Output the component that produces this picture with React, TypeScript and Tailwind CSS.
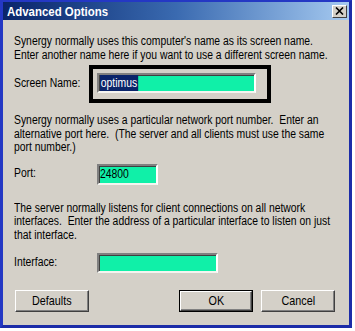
import React from "react";

const font = { fontFamily: '"Liberation Sans", Arial, sans-serif' };

function N({ children, center }: { children: React.ReactNode; center?: boolean }) {
  return (
    <span
      className={`inline-block whitespace-nowrap scale-x-[0.83] ${center ? "origin-center" : "origin-left"}`}
    >
      {children}
    </span>
  );
}

function Field({ w, h, children }: { w: string; h: string; children?: React.ReactNode }) {
  return (
    <div
      className={`${w} ${h} bg-[#10f0a8] border-2 border-t-[#808080] border-l-[#808080] border-r-white border-b-[#f4f4f0] shadow-[inset_1px_1px_0_#404040] flex items-center pl-[1px] text-[12.5px] leading-none text-black overflow-hidden`}
    >
      {children}
    </div>
  );
}

function Btn({ label, def }: { label: string; def?: boolean }) {
  const inner = (
    <div className="w-full h-full bg-[#d4d0c8] border border-t-white border-l-white border-r-[#404040] border-b-[#404040] shadow-[inset_-1px_-1px_0_#808080] flex items-center justify-center text-[13px] text-black">
      <N center>{label}</N>
    </div>
  );
  return def ? (
    <div className="w-[74px] h-[22px] border border-black">{inner}</div>
  ) : (
    <div className="w-[74px] h-[22px]">{inner}</div>
  );
}

function Line({ children }: { children: React.ReactNode }) {
  return (
    <div className="h-[13.5px]">
      <N>{children}</N>
    </div>
  );
}

export default function App() {
  return (
    <div className="w-[355px] h-[331px] bg-white overflow-hidden" style={font}>
      <div className="w-[352px] h-[328px] border-[3px] border-t-2 border-[#2438c4] border-r-[#1c2ca8] border-b-[#1c2ca8] bg-[#d4d0c8] flex flex-col">
        <div className="h-[18px] bg-gradient-to-r from-[#0a246a] via-[#3a6ab0] to-[#a6caf0] flex items-center justify-between pl-[4px] pr-[2px]">
          <span className="text-white font-bold text-[13px] leading-none inline-block whitespace-nowrap scale-x-[0.88] origin-left">
            Advanced Options
          </span>
          <div className="w-[15px] h-[13px] bg-[#d4d0c8] border border-t-white border-l-white border-r-[#404040] border-b-[#404040] flex items-center justify-center">
            <svg width="9" height="8" viewBox="0 0 9 8">
              <path d="M1 0.5 L8 7.5 M8 0.5 L1 7.5" stroke="#000" strokeWidth="1.6" />
            </svg>
          </div>
        </div>
        <div className="flex flex-col px-[11px] pt-[15px] text-[12.5px] leading-[13.5px] text-black">
          <div>
            <Line>Synergy normally uses this computer's name as its screen name.</Line>
            <Line>Enter another name here if you want to use a different screen name.</Line>
          </div>
          <div className="flex items-center mt-[3px] h-[38px]">
            <span className="w-[75px]">
              <N>Screen Name:</N>
            </span>
            <div className="w-[182px] h-[38px] border-4 border-black pt-[4px] pl-[4px]">
              <Field w="w-[159px]" h="h-[20px]">
                <N>
                  <span className="bg-[#0a246a] text-white px-[1px] py-[2px]">optimus</span>
                </N>
              </Field>
            </div>
          </div>
          <div className="mt-[11px]">
            <Line>Synergy normally uses a particular network port number.&nbsp; Enter an</Line>
            <Line>alternative port here.&nbsp; (The server and all clients must use the same</Line>
            <Line>port number.)</Line>
          </div>
          <div className="flex items-center mt-[9px]">
            <span className="w-[83px]">
              <N>Port:</N>
            </span>
            <Field w="w-[61px]" h="h-[21px]">
              <N>24800</N>
            </Field>
          </div>
          <div className="mt-[17px]">
            <Line>The server normally listens for client connections on all network</Line>
            <Line>interfaces.&nbsp; Enter the address of a particular interface to listen on just</Line>
            <Line>that interface.</Line>
          </div>
          <div className="flex items-center mt-[11px]">
            <span className="w-[83px]">
              <N>Interface:</N>
            </span>
            <Field w="w-[121px]" h="h-[20px]" />
          </div>
          <div className="flex items-center mt-[17px] pl-[1px]">
            <Btn label="Defaults" />
            <div className="ml-[90px]">
              <Btn label="OK" def />
            </div>
            <div className="ml-[8px]">
              <Btn label="Cancel" />
            </div>
          </div>
        </div>
      </div>
    </div>
  );
}
